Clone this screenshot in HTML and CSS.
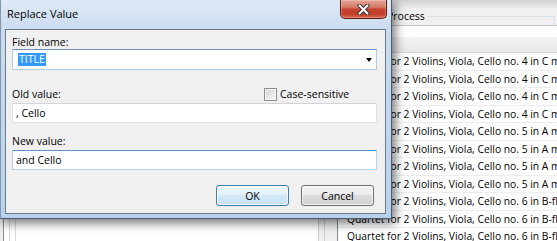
FILE: index.html
```html
<!DOCTYPE html>
<html lang="en">
<head>
  <meta charset="UTF-8">
  <title>Replace Value</title>
  <link rel="stylesheet" href="styles.css">
</head>
<body>
  <div class="app">
    <div class="side">
      <div class="tree"><div class="gutter"></div></div>
      <div class="splitter"></div>
    </div>
    <div class="process">
      <div class="group-title"><span>Process</span></div>
      <div class="list">
        <div class="list-head"></div>
        <div class="row">Quartet for 2 Violins, Viola, Cello no. 4 in C major</div>
        <div class="row">Quartet for 2 Violins, Viola, Cello no. 4 in C major</div>
        <div class="row">Quartet for 2 Violins, Viola, Cello no. 4 in C major</div>
        <div class="row">Quartet for 2 Violins, Viola, Cello no. 4 in C major</div>
        <div class="row">Quartet for 2 Violins, Viola, Cello no. 5 in A major</div>
        <div class="row">Quartet for 2 Violins, Viola, Cello no. 5 in A major</div>
        <div class="row">Quartet for 2 Violins, Viola, Cello no. 5 in A major</div>
        <div class="row">Quartet for 2 Violins, Viola, Cello no. 5 in A major</div>
        <div class="row">Quartet for 2 Violins, Viola, Cello no. 6 in B-flat major</div>
        <div class="row">Quartet for 2 Violins, Viola, Cello no. 6 in B-flat major</div>
        <div class="row">Quartet for 2 Violins, Viola, Cello no. 6 in B-flat major</div>
      </div>
    </div>
  </div>

  <div class="dialog">
    <div class="titlebar">
      <span class="title">Replace Value</span>
      <button class="close">
        <svg width="13" height="11" viewBox="0 0 13 11">
          <path d="M2.5 1.5 L10.5 9.5 M10.5 1.5 L2.5 9.5" stroke="#3a3a3a" stroke-width="4" stroke-linecap="round"/>
          <path d="M2.5 1.5 L10.5 9.5 M10.5 1.5 L2.5 9.5" stroke="#fff" stroke-width="2" stroke-linecap="round"/>
        </svg>
      </button>
    </div>
    <div class="client">
      <div class="field-label">Field name:</div>
      <div class="combo">
        <span class="selected">TITLE</span>
        <span class="arrow"></span>
      </div>
      <div class="label-row">
        <span class="field-label">Old value:</span>
        <label class="check"><span class="box"></span>Case-sensitive</label>
      </div>
      <div class="input">, Cello</div>
      <div class="field-label new-label">New value:</div>
      <div class="input focused">and Cello</div>
      <div class="buttons">
        <button class="btn btn-default">OK</button>
        <button class="btn">Cancel</button>
      </div>
    </div>
  </div>
</body>
</html>
```

FILE: styles.css
```css
* {
  box-sizing: border-box;
  margin: 0;
  padding: 0;
}

body {
  font-family: "Open Sans", "Noto Sans", sans-serif;
  font-size: 10.5px;
  color: #000;
  background: #fff;
  width: 557px;
  height: 241px;
  overflow: hidden;
  position: relative;
}

/* background application */
.app {
  display: flex;
  height: 241px;
}

.side {
  width: 337px;
  flex-shrink: 0;
  display: flex;
  background: #f0f0f0;
}

.tree {
  margin-left: 3px;
  width: 316px;
  border-left: 1px solid #8e8f8f;
  border-right: 1px solid #cfcfcf;
  background: #fff;
}

.gutter {
  margin-left: 5px;
  width: 7px;
  height: 100%;
  border-left: 1px solid #dadada;
  border-right: 1px solid #dadada;
}

.splitter {
  margin-left: 5px;
  flex: 1;
  border-left: 1px solid #cfcfcf;
}

.process {
  flex: 1;
  min-width: 0;
  display: flex;
  flex-direction: column;
  background: linear-gradient(#d2d2d2, #f0f0f0 9px);
}

.group-title {
  height: 25px;
  display: flex;
  padding-left: 50px;
}

.group-title span {
  padding-top: 8px;
  line-height: 17px;
}

.group-title::after {
  content: "";
  flex: 1;
  margin: 16px 2px 0 3px;
  border-top: 1px solid #d5dfe5;
  border-right: 1px solid #d5dfe5;
}

.list {
  flex: 1;
  border-top: 1px solid #c5c5c5;
  border-left: 1px solid #828790;
  background: #fff;
}

.list-head {
  height: 27px;
  border-bottom: 1px solid #d5d5d5;
  background: linear-gradient(#fff 42%, #f3f3f4 42%, #e8e9ea);
}

.row {
  height: 17.5px;
  line-height: 17px;
  padding-left: 9px;
  font-size: 10.3px;
  white-space: nowrap;
  overflow: hidden;
  border-bottom: 1px solid #ededed;
}

/* dialog window */
.dialog {
  position: absolute;
  left: 0;
  top: 0;
  width: 392px;
  height: 219px;
  display: flex;
  flex-direction: column;
  border: 1px solid #4b5b6f;
  border-top: 0;
  border-left-color: #8296ad;
  background: linear-gradient(#dfeaf6, #cadcef 29px, #b9d2ec);
  box-shadow: 2px 3px 10px 1px rgba(0, 0, 0, 0.55);
}

.titlebar {
  height: 29px;
  flex-shrink: 0;
  display: flex;
  align-items: flex-start;
  padding-left: 6px;
}

.title {
  margin-top: 7px;
  line-height: 14px;
  font-size: 11px;
}

.close {
  margin-left: auto;
  margin-right: 4px;
  width: 47px;
  height: 19px;
  display: flex;
  align-items: center;
  justify-content: center;
  border: 1px solid #5b1a13;
  border-top: 0;
  border-radius: 0 0 5px 5px;
  background: linear-gradient(#e6a596 0%, #d77a66 40%, #c4432e 52%, #c23d28 78%, #d9694f 100%);
  box-shadow: inset 0 0 0 1px rgba(255, 255, 255, 0.25);
}

.client {
  margin: 0 5px 0 4px;
  height: 185px;
  flex-shrink: 0;
  border: 1px solid #6b7a8c;
  background: #f0f0f0;
  padding: 5px 8px 0 6px;
  display: flex;
  flex-direction: column;
}

.field-label {
  line-height: 14px;
  height: 14px;
}

.combo {
  height: 21px;
  display: flex;
  align-items: center;
  padding: 0 4px 0 5px;
  background: #fff;
  border: 1px solid #b0cce7;
  border-top-color: #6d93ba;
}

.selected {
  background: #3399ff;
  color: #fff;
  line-height: 13px;
  padding: 0 1px;
}

.arrow {
  margin-left: auto;
  border-left: 3.5px solid transparent;
  border-right: 3.5px solid transparent;
  border-top: 4px solid #000;
}

.label-row {
  margin-top: 17px;
  height: 14px;
  display: grid;
  grid-template-columns: 252px auto;
  align-items: center;
}

.check {
  display: flex;
  align-items: center;
  gap: 3px;
  line-height: 14px;
}

.box {
  width: 13px;
  height: 13px;
  border: 1px solid #8f8f8f;
  background: linear-gradient(135deg, #d6d6d6, #f6f6f6);
  box-shadow: inset 0 0 0 1px #f4f4f4;
}

.input {
  height: 20px;
  margin-top: 2px;
  padding-left: 3px;
  line-height: 18px;
  background: #fff;
  border: 1px solid #e2e3e6;
  border-top-color: #d4d5d8;
}

.input.focused {
  border-color: #b6d1ea;
  border-top-color: #5f92c4;
}

.new-label {
  margin-top: 11px;
}

.buttons {
  margin-top: 15px;
  display: flex;
  justify-content: flex-end;
  gap: 12px;
  padding-right: 3px;
}

.btn {
  width: 73px;
  height: 21px;
  font-family: inherit;
  font-size: 10.5px;
  color: #000;
  border: 1px solid #707070;
  border-radius: 3px;
  background: linear-gradient(#f2f2f2, #ebebeb 50%, #dddddd 50%, #cfcfcf);
  box-shadow: inset 0 0 0 1px rgba(255, 255, 255, 0.7);
}

.btn-default {
  border-color: #3c7fb1;
  background: linear-gradient(#eef6fc, #e2f0fa 50%, #d3e8f7 50%, #c6e1f4);
}
```
